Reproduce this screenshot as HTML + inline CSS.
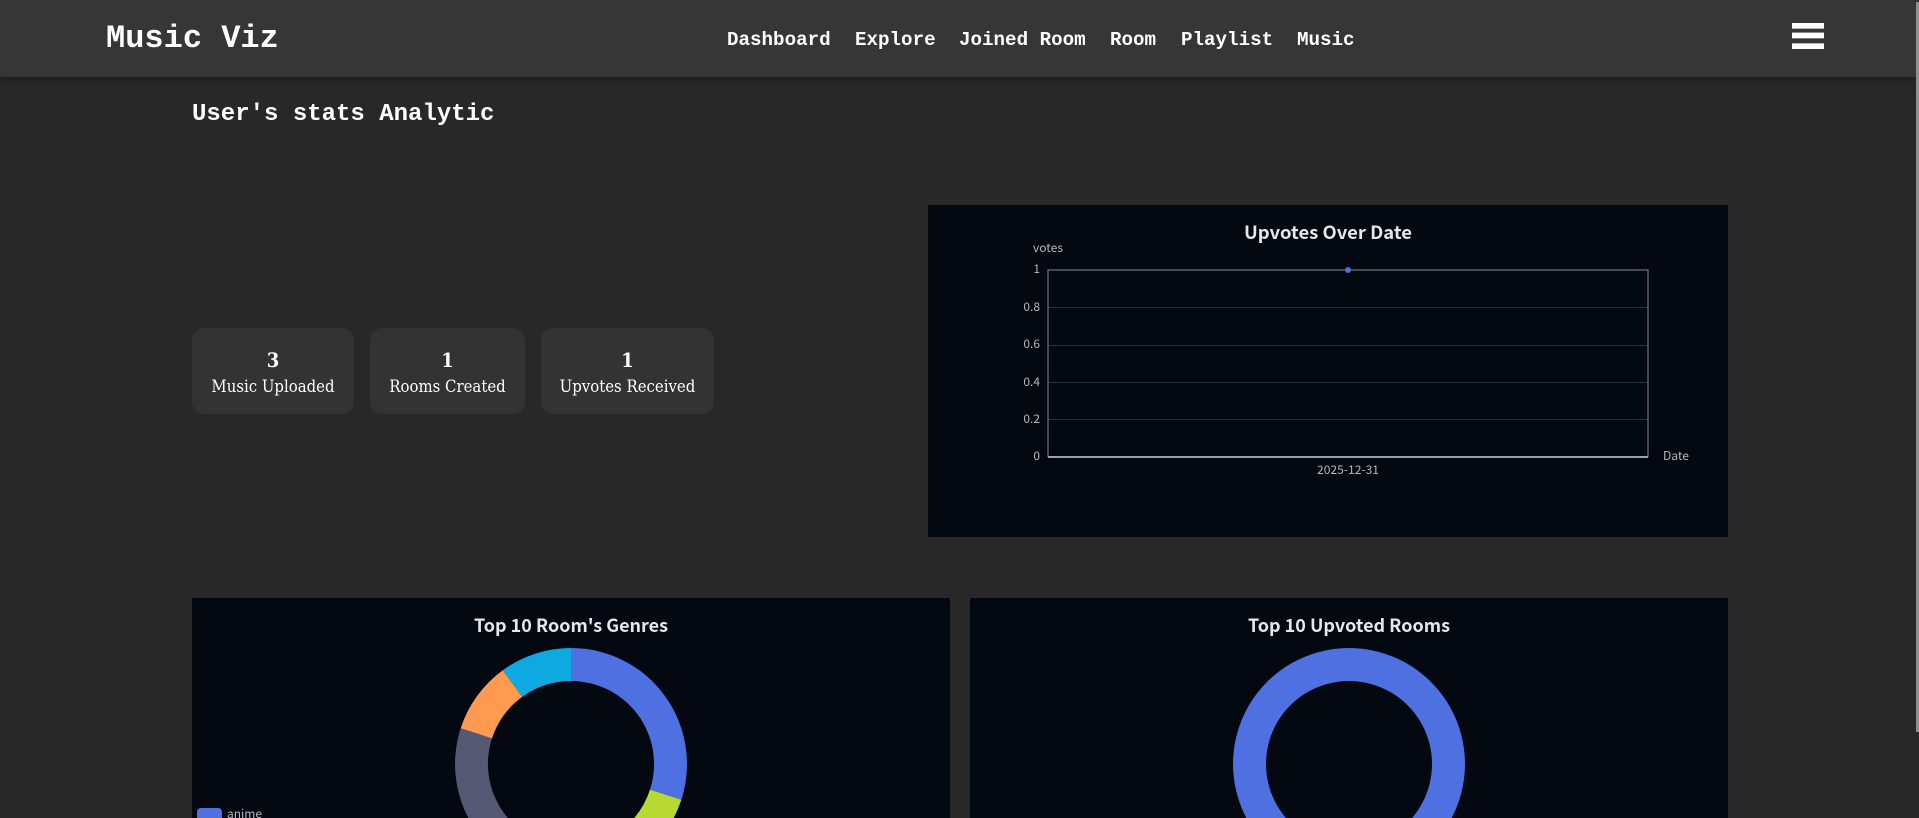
<!DOCTYPE html>
<html><head><meta charset="utf-8"><style>
html,body{margin:0;padding:0;width:1919px;height:818px;overflow:hidden;background:#282828}
body{position:relative}
.nav{position:absolute;left:0;top:0;width:1919px;height:77px;background:#363636;box-shadow:0 4px 8px rgba(0,0,0,.25)}
.mono{position:absolute;font-family:"Liberation Mono",monospace;font-weight:700;color:#fff;white-space:nowrap;line-height:1}
.bar{position:absolute;left:1792px;width:32px;background:#fff}
.card{position:absolute;top:328px;height:86px;background:#333;border-radius:12px;text-align:center;font-family:"DejaVu Serif","Noto Serif CJK JP","Liberation Serif",serif;font-stretch:condensed;color:#fff}
.card b{position:absolute;left:0;right:0;top:19px;font-size:20px;line-height:26px;font-weight:700}
.card span{position:absolute;left:0;right:0;top:47px;font-size:16.6px;line-height:24px}
.panel{position:absolute;background:#030811}
svg{position:absolute;left:0;top:0}
svg text{font-family:"Noto Sans CJK JP","Liberation Sans",sans-serif}
.sb{position:absolute;left:1916px;top:2px;width:3px;height:730px;background:#8f8f8f}
</style></head><body>
<div class="nav"></div>
<div class="mono" style="left:106px;top:23px;font-size:32px">Music Viz</div>
<div class="mono" style="left:727px;top:31px;font-size:19.2px">Dashboard</div>
<div class="mono" style="left:855px;top:31px;font-size:19.2px">Explore</div>
<div class="mono" style="left:959px;top:31px;font-size:19.2px">Joined Room</div>
<div class="mono" style="left:1110px;top:31px;font-size:19.2px">Room</div>
<div class="mono" style="left:1181px;top:31px;font-size:19.2px">Playlist</div>
<div class="mono" style="left:1297px;top:31px;font-size:19.2px">Music</div>
<div class="bar" style="top:23px;height:5px"></div><div class="bar" style="top:28px;height:1px;background:#b5b5b5"></div>
<div class="bar" style="top:32px;height:1px;background:#8a8a8a"></div><div class="bar" style="top:33px;height:5px"></div><div class="bar" style="top:38px;height:1px;background:#777"></div>
<div class="bar" style="top:43px;height:1px;background:#b5b5b5"></div><div class="bar" style="top:44px;height:5px"></div>
<div class="mono" style="left:192px;top:103px;font-size:24px">User's stats Analytic</div>
<div class="card" style="left:192px;width:162px"><b>3</b><span>Music Uploaded</span></div>
<div class="card" style="left:370px;width:155px"><b>1</b><span>Rooms Created</span></div>
<div class="card" style="left:541px;width:173px"><b>1</b><span>Upvotes Received</span></div>
<div class="panel" style="left:928px;top:205px;width:800px;height:332px"></div>
<div class="panel" style="left:192px;top:598px;width:758px;height:220px"></div>
<div class="panel" style="left:970px;top:598px;width:758px;height:220px"></div>
<svg width="1919" height="818" viewBox="0 0 1919 818">
<g fill="none">
<path d="M1048 307.5H1648M1048 345.5H1648M1048 382.5H1648M1048 419.5H1648" stroke="#2b2f39" stroke-width="1"/>
<path d="M1048 457V270H1648V457" stroke="#5b5f69" stroke-width="1.5"/>
<path d="M1048 457H1648" stroke="#d0d2d6" stroke-width="1.5"/>
</g>
<ellipse cx="1348" cy="270" rx="3" ry="3" fill="#4f70e0"/>
<g font-size="18" font-weight="700" fill="#e5e7eb" text-anchor="middle">
<text x="1328" y="239" textLength="168" lengthAdjust="spacingAndGlyphs">Upvotes Over Date</text>
<text x="571" y="632" textLength="194" lengthAdjust="spacingAndGlyphs">Top 10 Room's Genres</text>
<text x="1349" y="632" textLength="202" lengthAdjust="spacingAndGlyphs">Top 10 Upvoted Rooms</text>
</g>
<g font-size="12" fill="#b4b8bf">
<text x="1033" y="252" textLength="30" lengthAdjust="spacingAndGlyphs">votes</text>
<g text-anchor="end">
<text x="1040" y="273">1</text>
<text x="1040" y="311">0.8</text>
<text x="1040" y="348">0.6</text>
<text x="1040" y="386">0.4</text>
<text x="1040" y="423">0.2</text>
<text x="1040" y="460">0</text>
</g>
<text x="1348" y="474" text-anchor="middle" textLength="62" lengthAdjust="spacingAndGlyphs">2025-12-31</text>
<text x="1663" y="460" textLength="26" lengthAdjust="spacingAndGlyphs">Date</text>
<text x="227" y="818" textLength="35" lengthAdjust="spacingAndGlyphs">anime</text>
</g>
<rect x="197" y="808" width="25" height="20" rx="4" fill="#4f70e0"/>
<!-- genres donut, cx 571 cy 764 R116 r83 -->
<path d="M571 648A116 116 0 0 1 681.3 799.8L650 789.6A83 83 0 0 0 571 681Z" fill="#4f70e0"/>
<path d="M681.3 799.8A116 116 0 0 1 639.2 857.8L619.8 831.1A83 83 0 0 0 650 789.6Z" fill="#b8d832"/>
<path d="M571 880A116 116 0 0 1 460.7 728.2L492 738.4A83 83 0 0 0 571 847Z" fill="#555873"/>
<path d="M460.7 728.2A116 116 0 0 1 502.8 670.2L522.2 696.9A83 83 0 0 0 492 738.4Z" fill="#ff9a50"/>
<path d="M502.8 670.2A116 116 0 0 1 571 648V681A83 83 0 0 0 522.2 696.9Z" fill="#0fa9e2"/>
<path fill-rule="evenodd" d="M1349 648a116 116 0 1 1 -.01 0ZM1349 681a83 83 0 1 0 .01 0Z" fill="#4f70e0"/>
</svg>
<div class="sb"></div>
</body></html>
